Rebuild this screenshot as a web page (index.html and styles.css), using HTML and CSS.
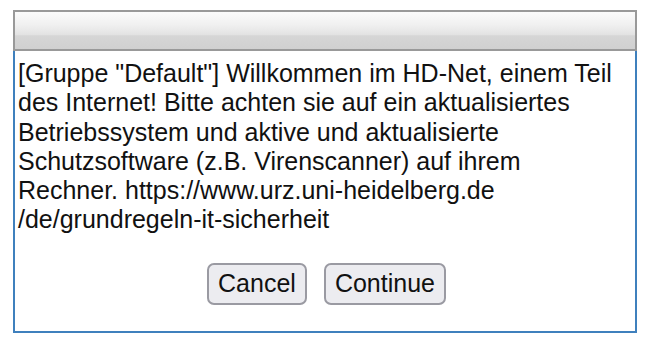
FILE: index.html
```html
<!DOCTYPE html>
<html>
<head>
<meta charset="utf-8">
<link rel="stylesheet" href="styles.css">
</head>
<body>
<div class="dialog">
  <div class="titlebar"></div>
  <div class="content">
    <p class="message">[Gruppe "Default"] Willkommen im HD-Net, einem Teil des Internet! Bitte achten sie auf ein aktualisiertes Betriebssystem und aktive und aktualisierte Schutzsoftware (z.B. Virenscanner) auf ihrem<br>Rechner. https://www.urz.uni-heidelberg.de<br>/de/grundregeln-it-sicherheit</p>
    <div class="buttons">
      <button class="btn">Cancel</button>
      <button class="btn">Continue</button>
    </div>
  </div>
</div>
</body>
</html>
```
FILE: styles.css
```css
html, body {
  margin: 0;
  padding: 0;
  background: #ffffff;
}
body {
  padding: 10px 13px 0 13px;
  font-family: "Liberation Sans", Arial, sans-serif;
}
.dialog {
  width: 624px;
  box-sizing: border-box;
}
.titlebar {
  height: 41px;
  box-sizing: border-box;
  border: 2px solid #999999;
  border-bottom-width: 2px;
  background: linear-gradient(to bottom, #fbfbfb 0%, #f0f0f0 35%, #e2e2e2 62%, #d6d6d6 64%, #d0d0d0 100%);
}
.content {
  border: 2px solid #3f80bd;
  border-top: none;
  height: 282px;
  box-sizing: border-box;
  padding: 8px 0 0 3px;
}
.message {
  margin: 0;
  font-size: 25px;
  line-height: 29.3px;
  color: #111;
}
.buttons {
  display: flex;
  justify-content: center;
  gap: 17px;
  margin-top: 28px;
}
.btn {
  font-family: "Liberation Sans", Arial, sans-serif;
  font-size: 25px;
  color: #111;
  height: 42px;
  padding: 0 9px;
  border: 2px solid #9a9aa2;
  border-radius: 7px;
  background: #ececf0;
}
```
